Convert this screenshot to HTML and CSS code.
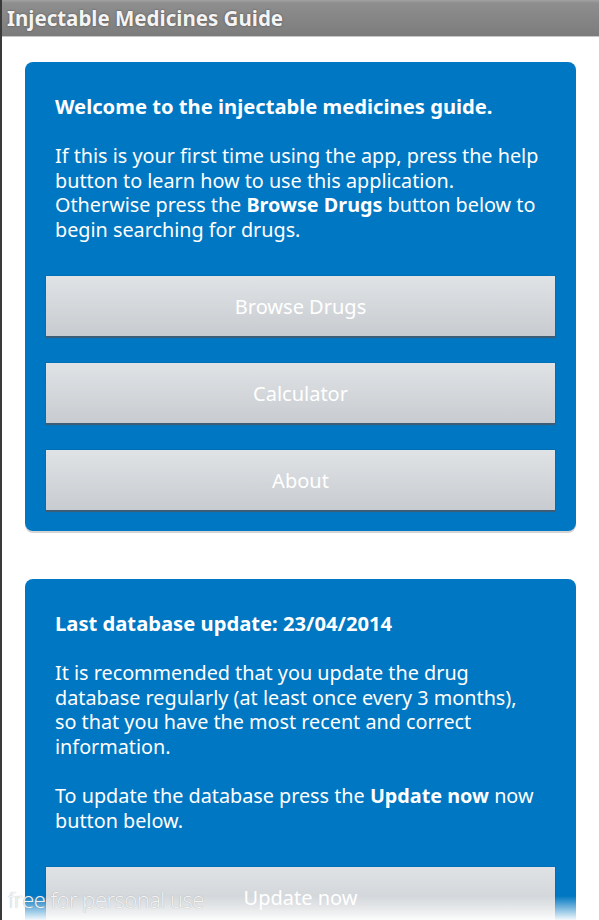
FILE: index.html
```html
<!DOCTYPE html>
<html>
<head>
<meta charset="utf-8">
<link rel="stylesheet" href="styles.css">
</head>
<body>
<div class="screen">
  <header class="titlebar">Injectable Medicines Guide</header>
  <main class="content">
    <section class="card">
      <h1 class="card-title">Welcome to the injectable medicines guide.</h1>
      <p class="card-text">If this is your first time using the app, press the help button to learn how to use this application. Otherwise press the <b>Browse Drugs</b> button below to begin searching for drugs.</p>
      <div class="buttons">
        <button class="btn">Browse Drugs</button>
        <button class="btn">Calculator</button>
        <button class="btn">About</button>
      </div>
    </section>
    <section class="card">
      <h1 class="card-title">Last database update: 23/04/2014</h1>
      <p class="card-text">It is recommended that you update the drug database regularly (at least once every 3 months), so that you have the most recent and correct information.</p>
      <p class="card-text">To update the database press the <b>Update now</b> now button below.</p>
      <div class="buttons">
        <button class="btn">Update now</button>
      </div>
    </section>
  </main>
  <div class="fade"></div>
  <div class="watermark">free for personal use</div>
</div>
</body>
</html>
```
FILE: styles.css
```css
html, body {
  margin: 0;
  padding: 0;
  height: 100%;
  overflow: hidden;
  background: #ffffff;
}
.screen {
  position: relative;
  height: 920px;
  overflow: hidden;
  border-left: 2px solid #3a3a3a;
  box-sizing: border-box;
  font-family: "Noto Sans", "Open Sans", sans-serif;
}
.titlebar {
  height: 37px;
  box-sizing: border-box;
  padding-left: 5px;
  line-height: 36px;
  font-size: 20.5px;
  font-weight: bold;
  color: #f4f4f4;
  text-shadow: 0 0 2px #444;
  background: linear-gradient(#a2a2a2 0px, #8e8e8e 3px, #7c7c7c 36px);
  border-bottom: 1px solid #c8c8c8;
}
.content {
  padding: 25px 23px 0 23px;
  display: flex;
  flex-direction: column;
  gap: 48px;
}
.card {
  background: #0077c2;
  border-radius: 8px;
  padding: 32px 21px 21px 21px;
  color: #ffffff;
  box-shadow: 0 2px 0 #d4d4d4;
}
.card-title {
  margin: 0 13px 0 9px;
  font-size: 20.2px;
  line-height: 24px;
  font-weight: bold;
}
.card-text {
  margin: 26px 13px 0 9px;
  font-size: 19.8px;
  line-height: 24.5px;
}
.card-text + .card-text {
  margin-top: 25px;
}
.buttons {
  margin-top: 34px;
  display: flex;
  flex-direction: column;
  gap: 27px;
}
.btn {
  height: 60px;
  border: none;
  border-radius: 0;
  font-family: "Noto Sans", "Open Sans", sans-serif;
  font-size: 20px;
  color: #ffffff;
  background: linear-gradient(#dfe3e6, #c8ccd0);
  box-shadow: 0 2px 1px #3b5d78, 0 0 0 1px rgba(0,0,0,0.05);
}
.fade {
  position: absolute;
  left: 0;
  right: 0;
  bottom: 0;
  height: 24px;
  background: linear-gradient(rgba(255,255,255,0), rgba(255,255,255,0.95));
}
.watermark {
  position: absolute;
  left: 6px;
  bottom: 6px;
  font-family: "Open Sans", sans-serif;
  font-weight: 300;
  font-size: 22px;
  color: rgba(255,255,255,0.9);
  text-shadow: 0 0 1px #9a9a9a;
  letter-spacing: -0.5px;
}
```
